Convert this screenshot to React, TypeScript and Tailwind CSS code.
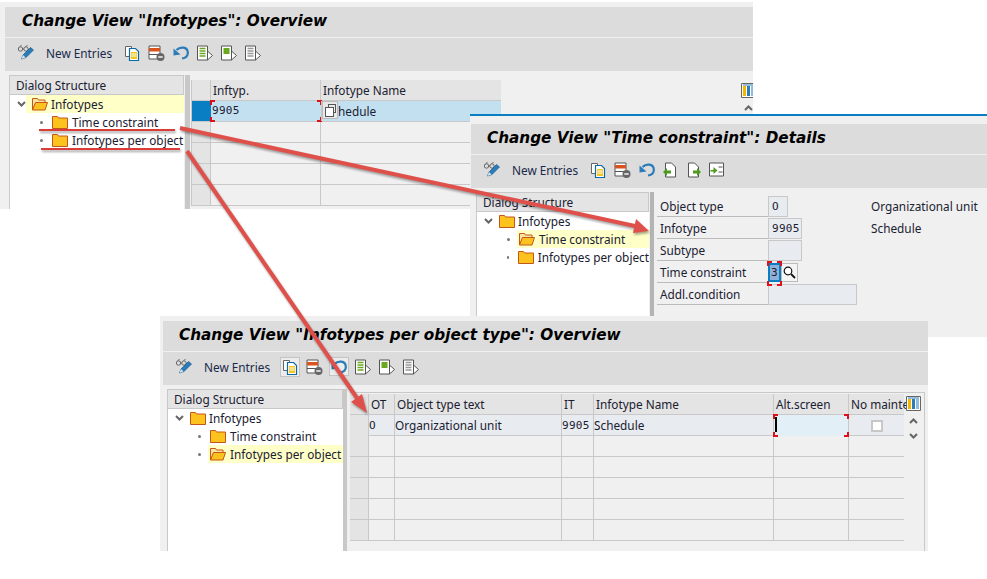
const sans = "font-['Noto_Sans','Open_Sans',sans-serif]";

function Glasses() {
  return (
    <svg width="18" height="17" viewBox="0 0 18 17" fill="none">
      <circle cx="3.5" cy="5" r="2.2" stroke="#666" strokeWidth="1" />
      <circle cx="9" cy="5" r="2.2" stroke="#666" strokeWidth="1" />
      <path d="M5.7 5h1M3 2.6 4.5 1M9 2.6 10.5 1" stroke="#666" />
      <path d="M4.5 15 6 11 13.5 3.5 16.5 6 9 13.5Z" fill="#2b7cb8" stroke="#17598c" strokeWidth=".7" />
      <path d="M4.5 15 6 11 8.5 13.5Z" fill="#dfe8ee" />
    </svg>
  );
}

function CopyIcon() {
  return (
    <svg width="16" height="16" viewBox="0 0 16 16" fill="none">
      <path d="M1.5 1.5h6v10h-6z" fill="#fff" stroke="#666" />
      <path d="M5.5 3.5h6l3 3v9h-9z" fill="#fff" stroke="#0a6aa8" strokeWidth="1.2" />
      <path d="M7 7h6v7H7z" fill="#f5c518" />
      <path d="M7.5 9h5M7.5 11h5" stroke="#fff" />
    </svg>
  );
}

function DeleteIcon() {
  return (
    <svg width="17" height="16" viewBox="0 0 17 16" fill="none">
      <path d="M1 1h11v13H1z" fill="#fff" stroke="#555" />
      <path d="M1 3h11v3.5H1z" fill="#d9531e" />
      <path d="M1 9.5h9" stroke="#555" />
      <circle cx="12.5" cy="12" r="4" fill="#666" />
      <path d="M10.3 12h4.4" stroke="#fff" strokeWidth="1.4" />
    </svg>
  );
}

function UndoIcon() {
  return (
    <svg width="16" height="15" viewBox="0 0 16 15" fill="none">
      <path d="M3.500 5C7 1.500 14.500 1.500 14.800 7.500 15 11 12 13 9 13.500" stroke="#2b7cb8" strokeWidth="2.200" />
      <path d="M.5 3.500 7.500 9.500.5 10.500Z" fill="#2b7cb8" />
    </svg>
  );
}

function SelectIcon({ mode }: { mode: "all" | "block" | "none" }) {
  const c = mode === "none" ? "#999" : "#6aa81e";
  return (
    <svg width="16" height="16" viewBox="0 0 16 16" fill="none">
      <path d="M.5 1h10v14H.5z" fill="#fff" stroke="#555" />
      {mode === "block" ? (
        <path d="M2.5 3h6v6h-6z" fill={c} />
      ) : (
        <path d="M2.5 3.5h6M2.5 6h6M2.5 8.5h6M2.5 11h6" stroke={c} strokeWidth="1.6" />
      )}
      <path d="M10.5 6l5 4.5-5 4.5z" fill="#fff" stroke="#555" />
    </svg>
  );
}

function PageArrow({ dir }: { dir: "prev" | "next" | "other" }) {
  return (
    <svg width="15" height="16" viewBox="0 0 15 16" fill="none">
      {dir === "other" ? (
        <>
          <path d="M.5 1h14v13H.5z" fill="#fff" stroke="#555" />
          <path d="M9.5 5h4M9.5 10h4" stroke="#555" />
          <path d="M1.5 8h3V5l4 3.5-4 3.5V9.500h-3z" fill="#4f9a1e" />
        </>
      ) : (
        <>
          <path d="M2.500 1h6l4 4v10h-10z" fill="#fff" stroke="#555" />
          <path
            d={dir === "prev" ? "M0 10l4-4v2.500h4v3H4V14z" : "M15 10l-4-4v2.500H7v3h4V14z"}
            fill="#4f9a1e"
          />
        </>
      )}
    </svg>
  );
}

function Folder({ open }: { open?: boolean }) {
  return open ? (
    <svg width="16" height="14" viewBox="0 0 16 14" fill="none">
      <path d="M.5 13V1.500h5l1 1.500h6.500v2" fill="#fbe3a0" stroke="#c4561a" />
      <path d="M.5 13 3.500 5.500H15.500L13 13Z" fill="#fcc31e" stroke="#c4561a" />
    </svg>
  ) : (
    <svg width="16" height="13" viewBox="0 0 16 13" fill="none">
      <path d="M.5 12.500V.5h5l1 1.500h9v10.500Z" fill="#fcc31e" stroke="#c4561a" />
    </svg>
  );
}

function Chevron() {
  return (
    <svg width="9" height="6" viewBox="0 0 9 6" fill="none">
      <path d="M1 1l3.500 3.500L8 1" stroke="#666" strokeWidth="2" />
    </svg>
  );
}

function ColumnsIcon() {
  return (
    <svg width="15" height="15" viewBox="0 0 15 15" fill="none">
      <path d="M.5.5h14v14H.5z" fill="#fff" stroke="#666" />
      <path d="M2 3h3v10H2z" fill="#f5b800" />
      <path d="M6 3h3v10H6z" fill="#2b7cb8" />
      <path d="M10 3h3v10h-3z" fill="#8fbbdd" />
      <path d="M2 2h11" stroke="#2b7cb8" />
    </svg>
  );
}

function Hovered({ children }: { children: React.ReactNode }) {
  return (
    <span className="flex bg-[#ececec] shadow-[0_0_0_1px_#ececec,0_0_0_2px_#c4c4c4]">{children}</span>
  );
}

function Corners() {
  const c = "absolute w-[5px] h-[5px] border-[#e0101a]";
  return (
    <>
      <span className={`${c} -top-px -left-px border-t-2 border-l-2`} />
      <span className={`${c} -top-px -right-px border-t-2 border-r-2`} />
      <span className={`${c} -bottom-px -left-px border-b-2 border-l-2`} />
      <span className={`${c} -bottom-px -right-px border-b-2 border-r-2`} />
    </>
  );
}

function Title({ text, pad }: { text: string; pad: string }) {
  return (
    <div
      className={`h-[30px] bg-[#dcdcdc] flex items-center ${pad} pb-[2px] font-['DejaVu_Sans',sans-serif] italic font-bold text-[15.25px] text-black whitespace-nowrap overflow-hidden`}
    >
      {text}
    </div>
  );
}

function Toolbar({ children }: { children: React.ReactNode }) {
  return (
    <div className={`mt-px h-[33px] bg-[#dcdcdc] flex items-center pl-3 pb-[2px] ${sans} text-[11.8px] text-[#1a2a4a]`}>
      <div className="-mt-[2px]">
        <Glasses />
      </div>
      <span className="ml-[11px] mr-[12px]">New Entries</span>
      <div className="flex items-center gap-2 -mt-[2px]">{children}</div>
    </div>
  );
}

function Tree({ active, width }: { active: "root" | "time" | "per"; width: string }) {
  const hl = "bg-[#ffffc8]";
  return (
    <div className={`${width} shrink-0 flex flex-col border-l border-[#c8c8c8] bg-white ${sans} text-[11.8px] text-[#1a2030] overflow-hidden`}>
      <div className="h-[20px] bg-[#e4e4e4] border border-l-0 border-[#c8c8c8] flex items-center pl-[6px] pt-[2px]">
        Dialog Structure
      </div>
      <div className="flex items-center h-[18px] pl-[7px]">
        <Chevron />
        <div className={`flex items-center gap-[3px] pl-[6px] h-full flex-1 ${active === "root" ? hl : ""}`}>
          <Folder open={active === "root"} />
          <span className="pt-[2px]">Infotypes</span>
        </div>
      </div>
      {[
        { key: "time", label: "Time constraint" },
        { key: "per", label: "Infotypes per object" },
      ].map((row) => (
        <div key={row.key} className="flex items-center h-[18px] pl-[30px] whitespace-nowrap">
          <span className="w-[3px] h-[3px] bg-[#777] rounded-full mr-[7px]" />
          <div className={`flex items-center gap-[4px] pl-[2px] h-full flex-1 ${active === row.key ? hl : ""}`}>
            <Folder open={active === row.key} />
            <span className="pt-[2px]">{row.label}</span>
          </div>
        </div>
      ))}
    </div>
  );
}

const mono = "font-['DejaVu_Sans_Mono',monospace] text-[11px] tracking-[0.3px]";

function Window1() {
  return (
    <div className="absolute left-0 top-[2px] w-[753px] h-[207px] bg-[#f0f0f0] pt-[5px] overflow-hidden">
      <div className="pl-[5px]">
        <Title text={'Change View "Infotypes": Overview'} pad="pl-[17px]" />
        <Toolbar>
          <CopyIcon />
          <DeleteIcon />
          <UndoIcon />
          <SelectIcon mode="all" />
          <SelectIcon mode="block" />
          <SelectIcon mode="none" />
        </Toolbar>
      </div>
      <div className="flex h-[139px] pt-[4px] pl-[9px]">
        <Tree active="root" width="w-[175px]" />
        <div className="w-[5px] ml-px bg-[#c8c8c8] shrink-0" />
        <div className={`mt-[5px] ml-px flex-1 relative ${sans} text-[11.8px] text-[#1a2030]`}>
          <div className="w-[310px] border-l border-[#c8c8c8]">
            <div className="grid grid-cols-[19px_110px_180px] h-[21px] bg-[#e4e4e4] border-b border-[#c8c8c8]">
              <div className="border-r border-[#c8c8c8]" />
              <div className="border-r border-[#c8c8c8] pl-[2px] leading-[20px]">Inftyp.</div>
              <div className="pl-[2px] leading-[20px]">Infotype Name</div>
            </div>
            <div className="grid grid-cols-[19px_110px_180px] h-[21px] border-b border-[#c8c8c8] bg-[#c3e0f0]">
              <div className="bg-[#0a7ec2]" />
              <div className={`relative pl-px leading-[20px] ${mono}`}>
                9905
                <Corners />
              </div>
              <div className="pl-[16px] leading-[20px] relative border-l border-[#c8c8c8]">
                hedule
                <span className="absolute left-0 top-0 w-[16px] h-[18px] bg-[#e8e8e8] border border-[#bbb]">
                  <span className="absolute left-[5px] top-[2px] w-[8px] h-[9px] border border-[#555]" />
                  <span className="absolute left-[2px] top-[5px] w-[9px] h-[10px] border border-[#555] bg-white" />
                </span>
              </div>
            </div>
            {[0, 1, 2, 3].map((i) => (
              <div key={i} className="grid grid-cols-[19px_110px_180px] h-[21px] border-b border-[#c8c8c8]">
                <div className="bg-[#e4e4e4] border-r border-[#c8c8c8]" />
                <div className="border-r border-[#c8c8c8]" />
                <div />
              </div>
            ))}
          </div>
          <div className="absolute -right-[3px] top-[3px] flex flex-col items-center">
            <ColumnsIcon />
            <div className="mt-[7px] rotate-180 leading-none">
              <Chevron />
            </div>
          </div>
        </div>
      </div>
    </div>
  );
}

const fields = [
  { label: "Object type", value: "O", w: "w-[20px]", text: "Organizational unit" },
  { label: "Infotype", value: "9905", w: "w-[34px]", text: "Schedule" },
  { label: "Subtype", value: "", w: "w-[34px]", text: "" },
  { label: "Time constraint", value: "3", w: "", text: "" },
  { label: "Addl.condition", value: "", w: "w-[89px]", text: "" },
];

function Window2() {
  return (
    <div className="absolute left-[470px] top-[114px] w-[517px] h-[223px] bg-[#f0f0f0] border-t-2 border-[#0a7ec2] pt-2 overflow-hidden">
      <div className="pl-px">
        <Title text={'Change View "Time constraint": Details'} pad="pl-[16px]" />
        <Toolbar>
          <CopyIcon />
          <DeleteIcon />
          <UndoIcon />
          <PageArrow dir="prev" />
          <PageArrow dir="next" />
          <PageArrow dir="other" />
        </Toolbar>
      </div>
      <div className="flex h-[145px] pt-[4px] pl-[6px]">
        <Tree active="time" width="w-[173px]" />
        <div className="w-[4px] ml-px bg-[#b4b4b4] shrink-0" />
        <div className={`pl-[3px] pt-[4px] flex flex-col gap-px ${sans} text-[11.8px] text-[#1a2030]`}>
          {fields.map((f) => (
            <div key={f.label} className="flex items-center h-[21px]">
              <div className="w-[111px] h-full border-b border-[#bbb] pl-[3px] leading-[20px]">{f.label}</div>
              {f.label === "Time constraint" ? (
                <div className="flex items-center h-full">
                  <div className={`relative w-[13px] h-[19px] border-2 border-[#0a7ec2] bg-[#8fb0d8] text-center leading-[15px] ${mono}`}>
                    3
                    <span className="absolute -left-[2px] -top-[3px] w-[13px] h-[23px] pointer-events-none">
                      <Corners />
                    </span>
                  </div>
                  <div className="w-[17px] h-[19px] bg-[#f4f4f4] border border-[#bbb] flex items-center justify-center">
                    <svg width="13" height="13" viewBox="0 0 13 13" fill="none">
                      <circle cx="5" cy="5" r="3.800" fill="#fff" stroke="#111" strokeWidth="1.200" />
                      <path d="M8 8l4 4" stroke="#111" strokeWidth="1.800" />
                    </svg>
                  </div>
                </div>
              ) : (
                <div className={`${f.w} h-full bg-[#e8ecf0] border border-[#c8c8c8] pl-[3px] leading-[19px] ${mono}`}>
                  {f.value}
                </div>
              )}
              {f.text && <span className="absolute left-[401px] whitespace-nowrap leading-[20px] pb-[2px]">{f.text}</span>}
            </div>
          ))}
        </div>
      </div>
    </div>
  );
}

const cols3 = "grid grid-cols-[19px_26px_167px_32px_180px_75px_55px]";

function Window3() {
  return (
    <div className="absolute left-[160px] top-[316px] w-[768px] h-[235px] bg-[#f0f0f0] pt-[5px] overflow-hidden">
      <div className="pl-[3px]">
        <Title text={'Change View "Infotypes per object type": Overview'} pad="pl-[16px]" />
        <Toolbar>
          <Hovered>
            <CopyIcon />
          </Hovered>
          <DeleteIcon />
          <Hovered>
            <UndoIcon />
          </Hovered>
          <SelectIcon mode="all" />
          <SelectIcon mode="block" />
          <SelectIcon mode="none" />
        </Toolbar>
      </div>
      <div className="flex h-[166px] pt-[4px] pl-[7px]">
        <Tree active="per" width="w-[176px]" />
        <div className="w-[4px] bg-[#c8c8c8] shrink-0" />
        <div className={`ml-[3px] mr-[3px] mt-[3px] pt-px flex-1 relative border-t border-r border-[#c8c8c8] ${sans} text-[11.8px] text-[#1a2030] whitespace-nowrap`}>
          <div className="w-[554px]">
            <div className={`${cols3} h-[21px] bg-[#e4e4e4] border-b border-[#c8c8c8]`}>
              <div className="border-r border-[#c8c8c8]" />
              <div className="border-r border-[#c8c8c8] pl-[2px] leading-[21px]">OT</div>
              <div className="border-r border-[#c8c8c8] pl-[2px] leading-[21px]">Object type text</div>
              <div className="border-r border-[#c8c8c8] pl-[2px] leading-[21px]">IT</div>
              <div className="border-r border-[#c8c8c8] pl-[2px] leading-[21px]">Infotype Name</div>
              <div className="border-r border-[#c8c8c8] pl-[2px] leading-[21px]">Alt.screen</div>
              <div className="pl-[2px] leading-[21px]">No mainte</div>
            </div>
            <div className={`${cols3} h-[21px] bg-[#e8ecf0] border-b border-[#c8c8c8] leading-[21px]`}>
              <div className="bg-[#e4e4e4] border-r border-[#c8c8c8]" />
              <div className={`border-r border-[#c8c8c8] ${mono}`}>O</div>
              <div className="border-r border-[#c8c8c8]">Organizational unit</div>
              <div className={`border-r border-[#c8c8c8] ${mono}`}>9905</div>
              <div className="border-r border-[#c8c8c8]">Schedule</div>
              <div className="relative bg-[#e3eff7] border-r border-[#c8c8c8]">
                <span className="absolute left-[1px] top-[2px] w-[2px] h-[15px] bg-black" />
                <Corners />
              </div>
              <div className="flex items-center justify-center">
                <span className="w-[12px] h-[12px] bg-white border-2 border-[#c8c8c8]" />
              </div>
            </div>
            {[0, 1, 2, 3, 4].map((i) => (
              <div key={i} className={`${cols3} h-[21px] border-b border-[#c8c8c8]`}>
                <div className="bg-[#e4e4e4] border-r border-[#c8c8c8]" />
                <div className="border-r border-[#c8c8c8]" />
                <div className="border-r border-[#c8c8c8]" />
                <div className="border-r border-[#c8c8c8]" />
                <div className="border-r border-[#c8c8c8]" />
                <div className="border-r border-[#c8c8c8]" />
                <div />
              </div>
            ))}
          </div>
          <div className="absolute left-[556px] top-[3px] flex flex-col items-center">
            <ColumnsIcon />
            <div className="mt-[7px] rotate-180 leading-none">
              <Chevron />
            </div>
            <div className="mt-[9px] leading-none">
              <Chevron />
            </div>
          </div>
        </div>
      </div>
    </div>
  );
}

function Arrows() {
  return (
    <svg
      className="absolute inset-0 pointer-events-none drop-shadow-[1px_2px_1px_rgba(0,0,0,0.35)]"
      width="987"
      height="579"
      viewBox="0 0 987 579"
      fill="none"
    >
      <path d="M39 130H175M41 149H180" stroke="#dc3c38" strokeWidth="2" />
      <path d="M180 128 635 226" stroke="#e0504a" strokeWidth="4" />
      <path d="M649 231 633 233 636 219Z" fill="#e0504a" />
      <path d="M187 151 357 398" stroke="#e0504a" strokeWidth="4" />
      <path d="M367 413 351 402 362 394Z" fill="#e0504a" />
    </svg>
  );
}

export default function App() {
  return (
    <div className="relative w-[987px] h-[579px] bg-white overflow-hidden">
      <Window1 />
      <Window2 />
      <Window3 />
      <Arrows />
    </div>
  );
}
